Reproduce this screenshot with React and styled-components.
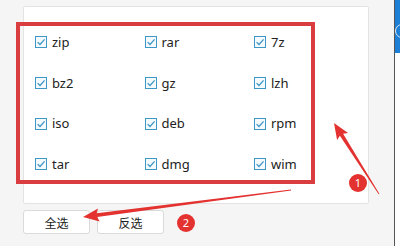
import styled, { createGlobalStyle } from "styled-components";

const GlobalStyle = createGlobalStyle`
  html, body { margin: 0; padding: 0; }
  body {
    width: 400px;
    height: 246px;
    overflow: hidden;
    background: #f5f5f5;
    font-family: "Noto Sans", "Noto Sans CJK SC", sans-serif;
  }
`;

const formats = ["zip", "rar", "7z", "bz2", "gz", "lzh", "iso", "deb", "rpm", "tar", "dmg", "wim"];

const Page = styled.div`
  position: relative;
  display: flex;
  width: 400px;
  height: 246px;
`;

const Main = styled.div`
  flex: 1;
  padding: 6px 0 0 23px;
  display: flex;
  flex-direction: column;
`;

const Panel = styled.div`
  position: relative;
  width: 344px;
  height: 196px;
  background: #fff;
  border: 1px solid #e3e3e3;
  border-radius: 2px;
`;

const Grid = styled.div`
  display: grid;
  grid-template-columns: repeat(3, 109.5px);
  grid-auto-rows: 40.7px;
  padding: 15px 0 0 11px;
`;

const Item = styled.label`
  display: flex;
  align-items: center;
  gap: 5px;
  font-size: 13px;
  color: #222;
  line-height: 1;
`;

const Frame = styled.div`
  position: absolute;
  left: -8px;
  top: 15px;
  width: 291px;
  height: 154px;
  border: 4px solid #da3d3f;
`;

const Buttons = styled.div`
  display: flex;
  gap: 7px;
  margin-top: 6px;
`;

const Button = styled.button`
  width: 67px;
  height: 24px;
  background: #fff;
  border: 1px solid #dadada;
  border-radius: 3px;
  font-family: "Noto Sans CJK SC", sans-serif;
  font-size: 12px;
  color: #222;
  padding: 0;
`;

const Side = styled.div`
  width: 5px;
  border-left: 1px solid #555;
  background: #fff;
`;

const SideBar = styled.div`
  height: 53px;
  background: #1e7fd6;
  position: relative;
  overflow: hidden;
  &::after {
    content: "";
    position: absolute;
    left: 0;
    top: 24px;
    width: 12px;
    height: 12px;
    border: 1.5px solid #dfe9f3;
    border-radius: 50%;
    background: #1e7fd6;
  }
`;

const Overlay = styled.svg`
  position: absolute;
  inset: 0;
  pointer-events: none;
`;

function Check() {
  return (
    <svg width="12" height="12" viewBox="0 0 12 12">
      <rect x="0.5" y="0.5" width="11" height="11" fill="#f4fafd" stroke="#3f97c6" />
      <path d="M2.6 6.1 L5 8.5 L9.6 3.4" fill="none" stroke="#3f97c6" strokeWidth="1.3" />
    </svg>
  );
}

function Arrow({ x1, y1, x2, y2, head = 15, wing = 6.5 }) {
  const len = Math.hypot(x2 - x1, y2 - y1);
  const angle = (Math.atan2(y2 - y1, x2 - x1) * 180) / Math.PI;
  const L = len;
  const pts = [
    [0, -0.4], [L - head + 1, -1.9], [L - head - 1, -wing], [L, 0],
    [L - head - 1, wing], [L - head + 1, 1.9], [0, 0.4],
  ].map((p) => p.join(",")).join(" ");
  return (
    <polygon
      points={pts}
      fill="#e3322f"
      transform={`translate(${x1} ${y1}) rotate(${angle})`}
    />
  );
}

function Badge({ x, y, n }) {
  return (
    <g>
      <circle cx={x} cy={y} r="9" fill="#e3322f" />
      <text x={x} y={y + 4} textAnchor="middle" fontSize="11" fill="#fff" fontFamily="Noto Sans, sans-serif">{n}</text>
    </g>
  );
}

export default function App() {
  return (
    <>
      <GlobalStyle />
      <Page>
        <Main>
          <Panel>
            <Grid>
              {formats.map((f) => (
                <Item key={f}>
                  <Check />
                  {f}
                </Item>
              ))}
            </Grid>
            <Frame />
          </Panel>
          <Buttons>
            <Button>全选</Button>
            <Button>反选</Button>
          </Buttons>
        </Main>
        <Side>
          <SideBar />
        </Side>
        <Overlay width="400" height="246">
          <Arrow x1={379} y1={194} x2={334} y2={123} />
          <Arrow x1={291} y1={190} x2={83} y2={217} />
          <Badge x={358} y={183} n="1" />
          <Badge x={186} y={223} n="2" />
        </Overlay>
      </Page>
    </>
  );
}
